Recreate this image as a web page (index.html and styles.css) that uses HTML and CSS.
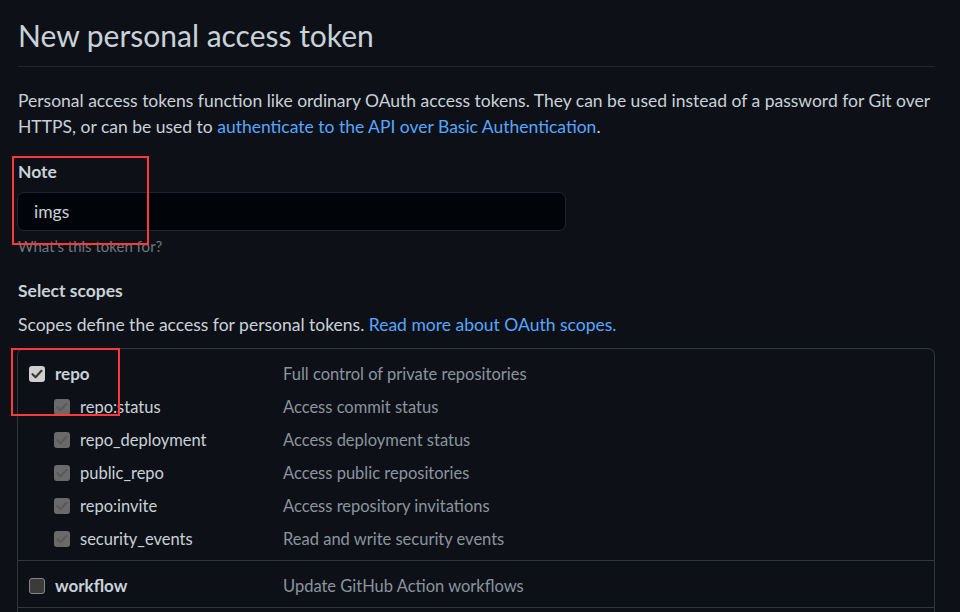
FILE: index.html
```html
<!DOCTYPE html>
<html lang="en">
<head>
<meta charset="utf-8">
<title>New personal access token</title>
<link rel="stylesheet" href="styles.css">
</head>
<body>
<main class="page">
  <h1 class="title">New personal access token</h1>
  <p class="intro">Personal access tokens function like ordinary OAuth access tokens. They can be used instead of a password for Git over HTTPS, or can be used to <a href="#">authenticate to the API over Basic Authentication</a>.</p>

  <div class="field">
    <label class="label">Note</label>
    <div class="input">imgs</div>
    <p class="hint">What’s this token for?</p>
  </div>

  <h2 class="label scopes-title">Select scopes</h2>
  <p class="scopes-desc">Scopes define the access for personal tokens. <a href="#">Read more about OAuth scopes.</a></p>

  <div class="scopes">
    <div class="group">
      <div class="row">
        <div class="name"><span class="cb cb-on"><svg viewBox="0 0 16 16"><path d="M3.5 8.2l3 3 6-6.4" /></svg></span><b>repo</b></div>
        <div class="desc">Full control of private repositories</div>
      </div>
      <div class="row sub">
        <div class="name"><span class="cb cb-dis"><svg viewBox="0 0 16 16"><path d="M3.5 8.2l3 3 6-6.4" /></svg></span>repo:status</div>
        <div class="desc">Access commit status</div>
      </div>
      <div class="row sub">
        <div class="name"><span class="cb cb-dis"><svg viewBox="0 0 16 16"><path d="M3.5 8.2l3 3 6-6.4" /></svg></span>repo_deployment</div>
        <div class="desc">Access deployment status</div>
      </div>
      <div class="row sub">
        <div class="name"><span class="cb cb-dis"><svg viewBox="0 0 16 16"><path d="M3.5 8.2l3 3 6-6.4" /></svg></span>public_repo</div>
        <div class="desc">Access public repositories</div>
      </div>
      <div class="row sub">
        <div class="name"><span class="cb cb-dis"><svg viewBox="0 0 16 16"><path d="M3.5 8.2l3 3 6-6.4" /></svg></span>repo:invite</div>
        <div class="desc">Access repository invitations</div>
      </div>
      <div class="row sub">
        <div class="name"><span class="cb cb-dis"><svg viewBox="0 0 16 16"><path d="M3.5 8.2l3 3 6-6.4" /></svg></span>security_events</div>
        <div class="desc">Read and write security events</div>
      </div>
    </div>
    <div class="group">
      <div class="row">
        <div class="name"><span class="cb cb-off"></span><b>workflow</b></div>
        <div class="desc">Update GitHub Action workflows</div>
      </div>
    </div>
    <div class="group group-empty"></div>
  </div>

  <div class="mark mark-note"></div>
  <div class="mark mark-repo"></div>
</main>
</body>
</html>
```

FILE: styles.css
```css
* { box-sizing: border-box; }
html, body {
  margin: 0;
  background: #0d1117;
  height: 100%;
  overflow: hidden;
}
body {
  font-family: Lato, "Noto Sans", "Liberation Sans", sans-serif;
  font-size: 17.5px;
  color: #c9d1d9;
}
.page {
  position: relative;
  width: 935px;
  padding: 0 0 0 18px;
}
.title {
  margin: 0;
  padding: 16px 0 12px;
  font-size: 30px;
  line-height: 38px;
  font-weight: 400;
  border-bottom: 1px solid #21262d;
}
.intro {
  margin: 21px 0 0;
  line-height: 26px;
}
a { color: #58a6ff; text-decoration: none; }
.field { margin-top: 19px; }
.label {
  display: block;
  margin: 0;
  font-size: 17.5px;
  font-weight: 700;
  line-height: 26px;
}
.input {
  margin-top: 7px;
  width: 549px;
  height: 39px;
  margin-left: -1px;
  padding: 0 16px;
  background: #010409;
  border: 1px solid #21262d;
  border-radius: 7px;
  line-height: 37px;
  color: #c9d1d9;
}
.hint {
  margin: 4px 0 0;
  font-size: 15px;
  line-height: 22px;
  color: #6e7681;
}
.scopes-title { margin-top: 21px; }
.scopes-desc {
  margin: 8px 0 0;
  line-height: 26px;
}
.scopes {
  margin-top: 10px;
  margin-left: -1px;
  border: 1px solid #30363d;
  border-bottom: 0;
  border-radius: 7px 7px 0 0;
  font-size: 16.5px;
}
.group {
  padding: 8px 0 5px;
  border-bottom: 1px solid #30363d;
}
.group-empty { height: 40px; border-bottom: 0; }
.row {
  display: grid;
  grid-template-columns: 265px 1fr;
  align-items: center;
  height: 33px;
}
.name {
  display: flex;
  align-items: center;
  gap: 10px;
  padding-left: 11px;
  white-space: nowrap;
}
.sub .name { padding-left: 36px; }
.name b { font-weight: 700; font-size: 17px; }
.desc { color: #8b949e; }
.cb {
  flex: none;
  width: 16px;
  height: 16px;
  border-radius: 3px;
  display: inline-flex;
}
.cb svg { width: 16px; height: 16px; fill: none; stroke-width: 2.2; stroke-linecap: round; stroke-linejoin: round; }
.cb-on { background: #cfcfcf; }
.cb-on svg { stroke: #3a3a3a; }
.cb-dis { background: #6a6a6a; }
.cb-dis svg { stroke: #5a5a5a; }
.cb-off { background: #3b3b3b; border: 1px solid #858585; }
.mark {
  position: absolute;
  border: 2px solid #ff3838;
}
.mark-note { left: 12px; top: 156px; width: 137px; height: 89px; }
.mark-repo { left: 11px; top: 348px; width: 109px; height: 68px; }
```
